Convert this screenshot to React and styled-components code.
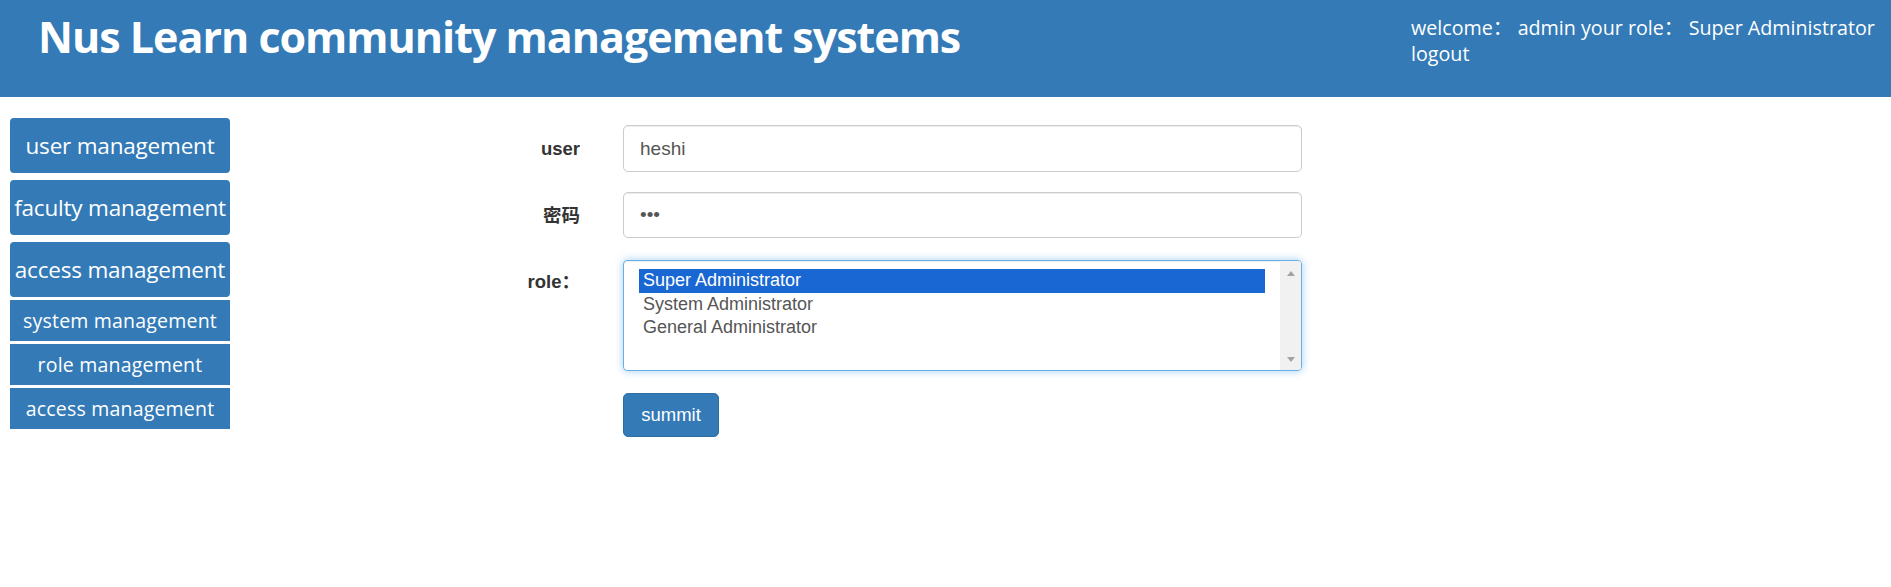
import React from 'react';
import styled, { createGlobalStyle } from 'styled-components';

const GlobalStyle = createGlobalStyle`
  html, body {
    margin: 0;
    padding: 0;
    background: #fff;
  }
  * {
    box-sizing: border-box;
  }
`;

const Header = styled.header`
  display: flex;
  justify-content: space-between;
  align-items: flex-start;
  height: 97px;
  background-color: #337ab7;
  color: #fff;
  font-family: 'Open Sans', 'Noto Sans', sans-serif;
`;

const Title = styled.h1`
  margin: 0;
  padding: 12px 0 0 38px;
  font-size: 43px;
  font-weight: 700;
  line-height: 50px;
  letter-spacing: -1px;
`;

const UserInfo = styled.div`
  width: 480px;
  padding-top: 15px;
  font-size: 19.7px;
  line-height: 25.5px;
  font-family: 'Open Sans', 'Noto Sans CJK SC', sans-serif;

  a {
    color: #fff;
    text-decoration: none;
  }
`;

const Body = styled.div`
  display: flex;
  align-items: flex-start;
`;

const Sidebar = styled.nav`
  display: flex;
  flex-direction: column;
  width: 220px;
  margin: 21px 0 0 10px;
  font-family: 'Open Sans', 'Noto Sans', sans-serif;
`;

const MenuButton = styled.a`
  display: flex;
  align-items: center;
  justify-content: center;
  height: ${p => (p.$sub ? '41px' : '55px')};
  margin-bottom: ${p => (p.$sub ? '3px' : '7px')};
  border-radius: ${p => (p.$sub ? '0' : '4px')};
  background-color: #337ab7;
  color: #fff;
  font-size: ${p => (p.$sub ? '19.5px' : '22.5px')};
  letter-spacing: ${p => (p.$sub ? '0.2px' : '-0.2px')};
  white-space: nowrap;
  text-decoration: none;

  &:nth-child(3) {
    margin-bottom: 3px;
  }
`;

const Form = styled.form`
  display: grid;
  grid-template-columns: 160px 679px;
  column-gap: 43px;
  margin: 28px 0 0 190px;
  font-family: 'Liberation Sans', Arial, 'Noto Sans CJK SC', sans-serif;
`;

const Row = styled.div`
  display: contents;
`;

const Label = styled.label`
  text-align: right;
  font-weight: 700;
  font-size: 18.5px;
  color: #333;
  line-height: 24px;
  padding-top: ${p => p.$top || '12px'};
  margin-bottom: ${p => p.$gap || '20px'};
`;

const Input = styled.input`
  height: ${p => p.$h || '47px'};
  margin-bottom: ${p => p.$gap || '20px'};
  padding: 0 16px;
  border: 1px solid #ccc;
  border-radius: 5px;
  box-shadow: inset 0 1px 1px rgba(0, 0, 0, 0.075);
  font-family: 'Liberation Sans', Arial, sans-serif;
  font-size: 19px;
  color: #555;
  outline: none;
`;

const ListBox = styled.div`
  display: flex;
  height: 111px;
  margin-bottom: 22px;
  border: 1px solid #66afe9;
  border-radius: 4px;
  box-shadow: inset 0 1px 1px rgba(0, 0, 0, 0.075), 0 0 8px rgba(102, 175, 233, 0.6);
  overflow: hidden;
`;

const Options = styled.ul`
  flex: 1;
  margin: 0;
  padding: 8px 15px 0 15px;
  list-style: none;
`;

const Option = styled.li`
  height: 23.5px;
  padding-left: 4px;
  font-size: 18px;
  line-height: 23px;
  color: ${p => (p.$selected ? '#fff' : '#555')};
  background: ${p => (p.$selected ? '#1967d2' : 'transparent')};
`;

const ScrollTrack = styled.div`
  display: flex;
  flex-direction: column;
  justify-content: space-between;
  align-items: center;
  width: 21px;
  padding: 10px 0 8px;
  background: #f1f1f1;
`;

const Arrow = styled.span`
  width: 0;
  height: 0;
  border-left: 4.5px solid transparent;
  border-right: 4.5px solid transparent;
  ${p => (p.$down ? 'border-top: 5px solid #a3a3a3;' : 'border-bottom: 5px solid #a3a3a3;')}
`;

const Spacer = styled.div``;

const Submit = styled.button`
  justify-self: start;
  width: 96px;
  height: 44px;
  padding: 0 16px;
  background-color: #337ab7;
  border: 1px solid #2e6da4;
  border-radius: 5px;
  color: #fff;
  font-family: 'Liberation Sans', Arial, sans-serif;
  font-size: 18.5px;
  cursor: pointer;
`;

const menu = [
  { name: 'user management' },
  { name: 'faculty management' },
  { name: 'access management' },
  { name: 'system management', sub: true },
  { name: 'role management', sub: true },
  { name: 'access management', sub: true },
];

const roles = ['Super Administrator', 'System Administrator', 'General Administrator'];

export default function App() {
  return (
    <>
      <GlobalStyle />
      <Header>
        <Title>Nus Learn community management systems</Title>
        <UserInfo>
          welcome：&nbsp;admin your role：&nbsp;Super Administrator
          <br />
          <a href="#">logout</a>
        </UserInfo>
      </Header>
      <Body>
        <Sidebar>
          {menu.map((item, idx) => (
            <MenuButton key={idx} href="#" $sub={item.sub}>
              {item.name}
            </MenuButton>
          ))}
        </Sidebar>
        <Form onSubmit={e => e.preventDefault()}>
          <Row>
            <Label>user</Label>
            <Input type="text" defaultValue="heshi" />
          </Row>
          <Row>
            <Label $gap="22px">密码</Label>
            <Input type="password" defaultValue="123" $h="46px" $gap="22px" />
          </Row>
          <Row>
            <Label $top="10px" $gap="22px">role：</Label>
            <ListBox>
              <Options>
                {roles.map((r, i) => (
                  <Option key={r} $selected={i === 0}>{r}</Option>
                ))}
              </Options>
              <ScrollTrack>
                <Arrow />
                <Arrow $down />
              </ScrollTrack>
            </ListBox>
          </Row>
          <Row>
            <Spacer />
            <Submit type="submit">summit</Submit>
          </Row>
        </Form>
      </Body>
    </>
  );
}
